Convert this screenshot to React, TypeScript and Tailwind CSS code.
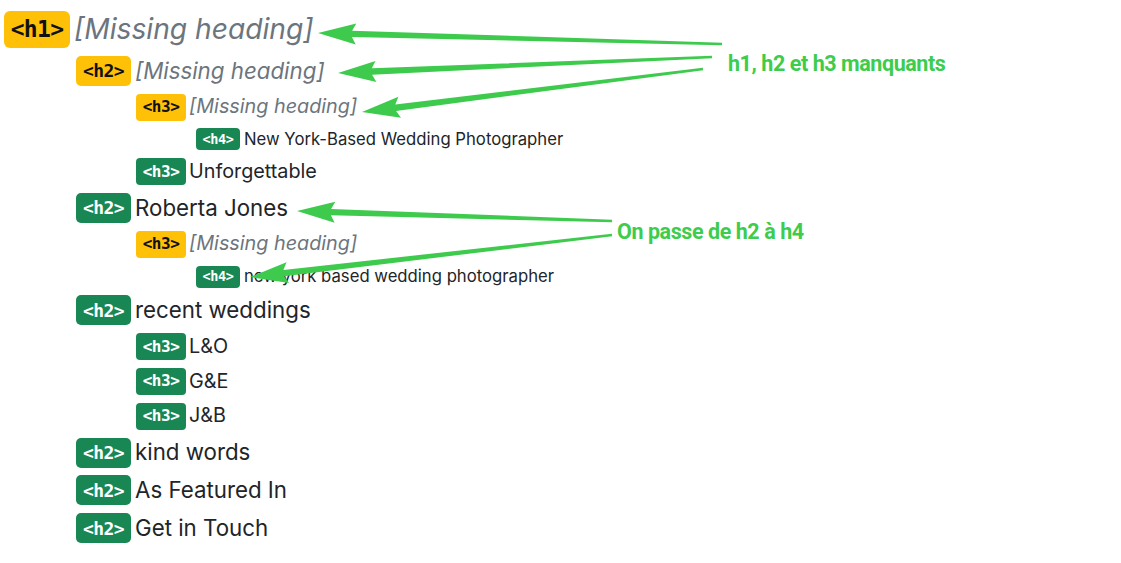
import React from "react"

type Item = {
  level: 1 | 2 | 3 | 4
  text: string
  missing?: boolean
}

const ITEMS: Item[] = [
  { level: 1, text: "[Missing heading]", missing: true },
  { level: 2, text: "[Missing heading]", missing: true },
  { level: 3, text: "[Missing heading]", missing: true },
  { level: 4, text: "New York-Based Wedding Photographer" },
  { level: 3, text: "Unforgettable" },
  { level: 2, text: "Roberta Jones" },
  { level: 3, text: "[Missing heading]", missing: true },
  { level: 4, text: "new york based wedding photographer" },
  { level: 2, text: "recent weddings" },
  { level: 3, text: "L&O" },
  { level: 3, text: "G&E" },
  { level: 3, text: "J&B" },
  { level: 2, text: "kind words" },
  { level: 2, text: "As Featured In" },
  { level: 2, text: "Get in Touch" },
]

// per-level look: indent, badge size, text size
const LEVEL = {
  1: { row: "ml-[4px] h-[37px] gap-[4px]", badge: "h-[37px] w-[66px] text-[23px] rounded-[6px]", text: "text-[28.2px]" },
  2: { row: "ml-[76px] h-[30px] gap-[4px]", badge: "h-[30px] w-[55px] text-[18px] rounded-[5px]", text: "text-[22.3px]" },
  3: { row: "ml-[136px] h-[27px] gap-[3px]", badge: "h-[27px] w-[50px] text-[16px] rounded-[4px]", text: "text-[19.8px]" },
  4: { row: "ml-[196px] h-[22px] gap-[4px]", badge: "h-[22px] w-[44px] text-[13.5px] rounded-[4px]", text: "text-[16.7px]" },
} as const

const ARROWS: [number, number, number, number][] = [
  [722, 44, 318, 33],
  [712, 57, 338, 73],
  [703, 69, 362, 112],
  [612, 221, 297, 211],
  [612, 235, 250, 277],
]

function arrowPoints(x1: number, y1: number, x2: number, y2: number) {
  const dx = x2 - x1
  const dy = y2 - y1
  const len = Math.hypot(dx, dy)
  const ux = dx / len
  const uy = dy / len
  const nx = -uy
  const ny = ux
  const headLen = 34
  const headHalf = 10.5
  const tailHalf = 1.2
  const neckHalf = 3.2
  const bx = x2 - ux * headLen
  const by = y2 - uy * headLen
  const pts = [
    [x1 + nx * tailHalf, y1 + ny * tailHalf],
    [bx + nx * neckHalf, by + ny * neckHalf],
    [bx - ux * 4 + nx * headHalf, by - uy * 4 + ny * headHalf],
    [x2, y2],
    [bx - ux * 4 - nx * headHalf, by - uy * 4 - ny * headHalf],
    [bx - nx * neckHalf, by - ny * neckHalf],
    [x1 - nx * tailHalf, y1 - ny * tailHalf],
  ]
  return pts.map((p) => p.map((v) => v.toFixed(1)).join(",")).join(" ")
}

function Badge({ level, missing }: { level: 1 | 2 | 3 | 4; missing?: boolean }) {
  return (
    <span
      className={`inline-flex shrink-0 items-center justify-center font-bold font-['DejaVu_Sans_Mono',monospace] tracking-[-0.03em] ${LEVEL[level].badge} ${
        missing ? "bg-[#ffc107] text-[#111]" : "bg-[#198754] text-white"
      }`}
    >
      {`<h${level}>`}
    </span>
  )
}

export default function App() {
  return (
    <div className="relative w-[1121px] h-[563px] bg-white overflow-hidden font-['Inter',sans-serif]">
      <div className="flex flex-col gap-[7.8px] pt-[11px]">
        {ITEMS.map((item, i) => (
          <div key={i} className={`flex items-center ${LEVEL[item.level].row}`}>
            <Badge level={item.level} missing={item.missing} />
            <span
              className={`${LEVEL[item.level].text} leading-none whitespace-nowrap ${
                item.missing ? "italic text-[#6c757d]" : "text-[#212529]"
              }`}
            >
              {item.text}
            </span>
          </div>
        ))}
      </div>

      {/* annotations */}
      <svg className="absolute inset-0 pointer-events-none" width="1121" height="563">
        {ARROWS.map((a, i) => (
          <polygon key={i} points={arrowPoints(...a)} fill="#3ecb4d" />
        ))}
      </svg>
      <div className="absolute left-[728px] top-[48px] text-[21.5px] font-bold text-[#3dcc4c] whitespace-nowrap font-['Roboto',sans-serif] tracking-[-0.02em]">
        h1, h2 et h3 manquants
      </div>
      <div className="absolute left-[617px] top-[216px] text-[21.5px] font-bold text-[#3dcc4c] whitespace-nowrap font-['Roboto',sans-serif] tracking-[-0.02em]">
        On passe de h2 à h4
      </div>
    </div>
  )
}
